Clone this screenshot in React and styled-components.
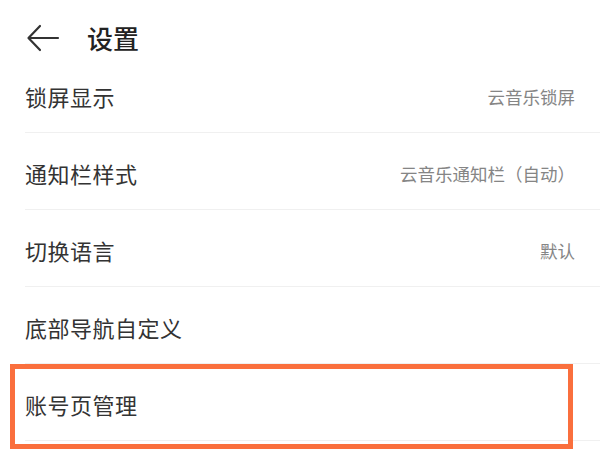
import styled, { createGlobalStyle } from "styled-components";

const GlobalStyle = createGlobalStyle`
  html, body {
    margin: 0;
    padding: 0;
    background: #fff;
    font-family: "Noto Sans CJK SC", "Noto Sans", sans-serif;
  }
`;

const Page = styled.div`
  width: 600px;
  height: 450px;
  overflow: hidden;
  background: #fff;
`;

const Header = styled.div`
  height: 56px;
  box-sizing: border-box;
  padding: 20px 0 0 26px;
  display: flex;
  align-items: center;
`;

const BackIcon = styled.svg`
  width: 34px;
  height: 28px;
  flex-shrink: 0;
`;

const Title = styled.h1`
  margin: 0 0 0 27px;
  font-size: 26px;
  font-weight: 500;
  color: #222;
  line-height: 1;
`;

const List = styled.ul`
  list-style: none;
  margin: 0;
  padding: 0 0 0 25px;
`;

// each row is 77px tall with its divider, text sits a little low
const Row = styled.li`
  position: relative;
  height: 77px;
  box-sizing: border-box;
  border-bottom: 1px solid #f0f0f0;
  display: flex;
  align-items: center;
  justify-content: space-between;
  padding: 4px 25px 0 0;
`;

const Label = styled.span`
  font-size: 22px;
  color: #333;
  letter-spacing: 0.5px;
`;

const Value = styled.span`
  font-size: 17.5px;
  color: #858585;
`;

const Highlight = styled.div`
  position: absolute;
  left: -15px;
  top: 0;
  width: 563px;
  height: 85px;
  box-sizing: border-box;
  border: 5px solid #fa6f3d;
  pointer-events: none;
`;

const items = [
  { label: "锁屏显示", value: "云音乐锁屏" },
  { label: "通知栏样式", value: "云音乐通知栏（自动）" },
  { label: "切换语言", value: "默认" },
  { label: "底部导航自定义" },
  { label: "账号页管理", marked: true },
];

export default function App() {
  return (
    <Page>
      <GlobalStyle />
      <Header>
        <BackIcon viewBox="0 0 34 28" fill="none" stroke="#333" strokeWidth="2.2" strokeLinecap="round" strokeLinejoin="round">
          <path d="M32 14H3M14 2L2.5 14L14 26" />
        </BackIcon>
        <Title>设置</Title>
      </Header>
      <List>
        {items.map((it) => (
          <Row key={it.label}>
            <Label>{it.label}</Label>
            {it.value && <Value>{it.value}</Value>}
            {it.marked && <Highlight />}
          </Row>
        ))}
      </List>
    </Page>
  );
}
